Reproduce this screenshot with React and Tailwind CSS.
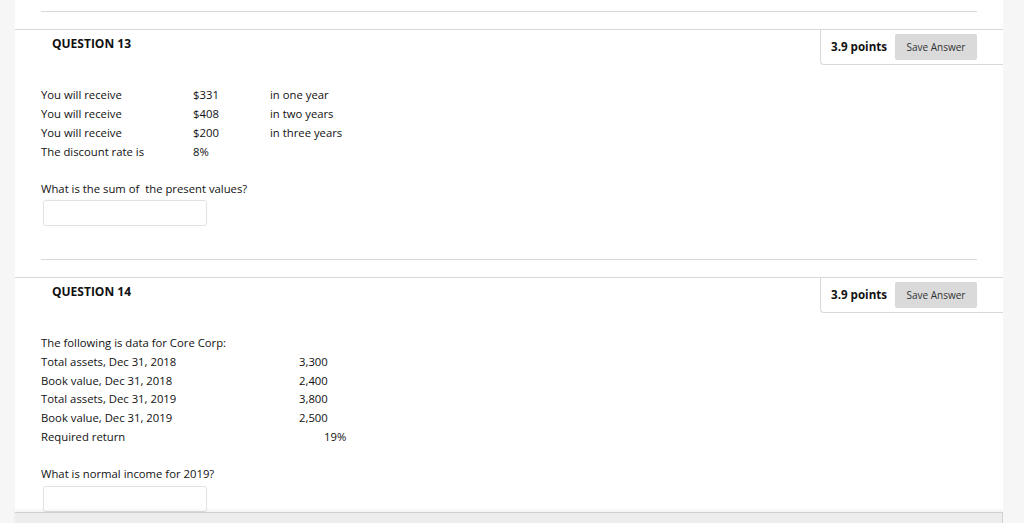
import React from 'react'

const font = { fontFamily: '"Open Sans", "Noto Sans", sans-serif' }

const PointsBox = () => (
  <div className="flex h-[35px] w-[183px] items-center rounded-bl-[4px] border-b border-l border-[#d8d8d8] pl-[10px] pr-[26px]">
    <span className="text-[11.6px] font-bold text-[#111]">3.9 points</span>
    <button className="ml-auto h-[26px] w-[82px] rounded-[2px] bg-[#dadada] text-[10px] text-[#333]">
      Save Answer
    </button>
  </div>
)

const Header = ({ title }) => (
  <div className="flex items-start justify-between border-t border-[#d8d8d8]">
    <div className="pl-[37px] pt-[5px] text-[12px] font-bold leading-[18px] text-[#111]">{title}</div>
    <PointsBox />
  </div>
)

const AnswerBox = () => (
  <div className="ml-[2px] h-[26px] w-[164px] rounded-[3px] border border-[#e2e2e2] bg-white" />
)

const q13 = [
  ['You will receive', '$331', 'in one year'],
  ['You will receive', '$408', 'in two years'],
  ['You will receive', '$200', 'in three years'],
  ['The discount rate is', '8%', ''],
]

const q14 = [
  ['Total assets, Dec 31, 2018', '3,300'],
  ['Book value, Dec 31, 2018', '2,400'],
  ['Total assets, Dec 31, 2019', '3,800'],
  ['Book value, Dec 31, 2019', '2,500'],
]

export default function App() {
  return (
    <div className="flex h-[523px] w-[1024px] overflow-hidden bg-white text-[11.3px] text-[#111]" style={font}>
      <div className="w-[15px] shrink-0 bg-[#f6f6f6]" />
      <div className="flex w-[988px] shrink-0 flex-col">
        <div className="mx-[26px] mt-[11px] border-t border-[#d8d8d8]" />
        <div className="mt-[17px]">
          <Header title="QUESTION 13" />
          <div className="pl-[26px] pt-[20px]">
            <div className="grid grid-cols-[152px_77px_auto] leading-[19px]">
              {q13.map((r, i) => (
                <React.Fragment key={i}>
                  <div>{r[0]}</div>
                  <div>{r[1]}</div>
                  <div>{r[2]}</div>
                </React.Fragment>
              ))}
            </div>
            <div className="mt-[18px] leading-[19px]">What is the sum of&nbsp; the present values?</div>
            <div className="mt-[2px]">
              <AnswerBox />
            </div>
          </div>
          <div className="mx-[26px] mt-[33px] border-t border-[#d8d8d8]" />
        </div>
        <div className="mt-[17px]">
          <Header title="QUESTION 14" />
          <div className="pl-[26px] pt-[21px]">
            <div className="leading-[18.8px]">The following is data for Core Corp:</div>
            <div className="grid grid-cols-[258px_auto] leading-[18.8px]">
              {q14.map((r, i) => (
                <React.Fragment key={i}>
                  <div>{r[0]}</div>
                  <div>{r[1]}</div>
                </React.Fragment>
              ))}
              <div>Required return</div>
              <div className="pl-[25px]">19%</div>
            </div>
            <div className="mt-[17px] leading-[19px]">What is normal income for 2019?</div>
            <div className="mt-[3px]">
              <AnswerBox />
            </div>
          </div>
        </div>
        <div className="flex-1 border-r border-t border-[#d0d0d0] bg-[#ededed] shadow-[0_-2px_3px_rgba(0,0,0,0.06)]" />
      </div>
      <div className="flex-1 bg-[#f6f6f6]" />
    </div>
  )
}
